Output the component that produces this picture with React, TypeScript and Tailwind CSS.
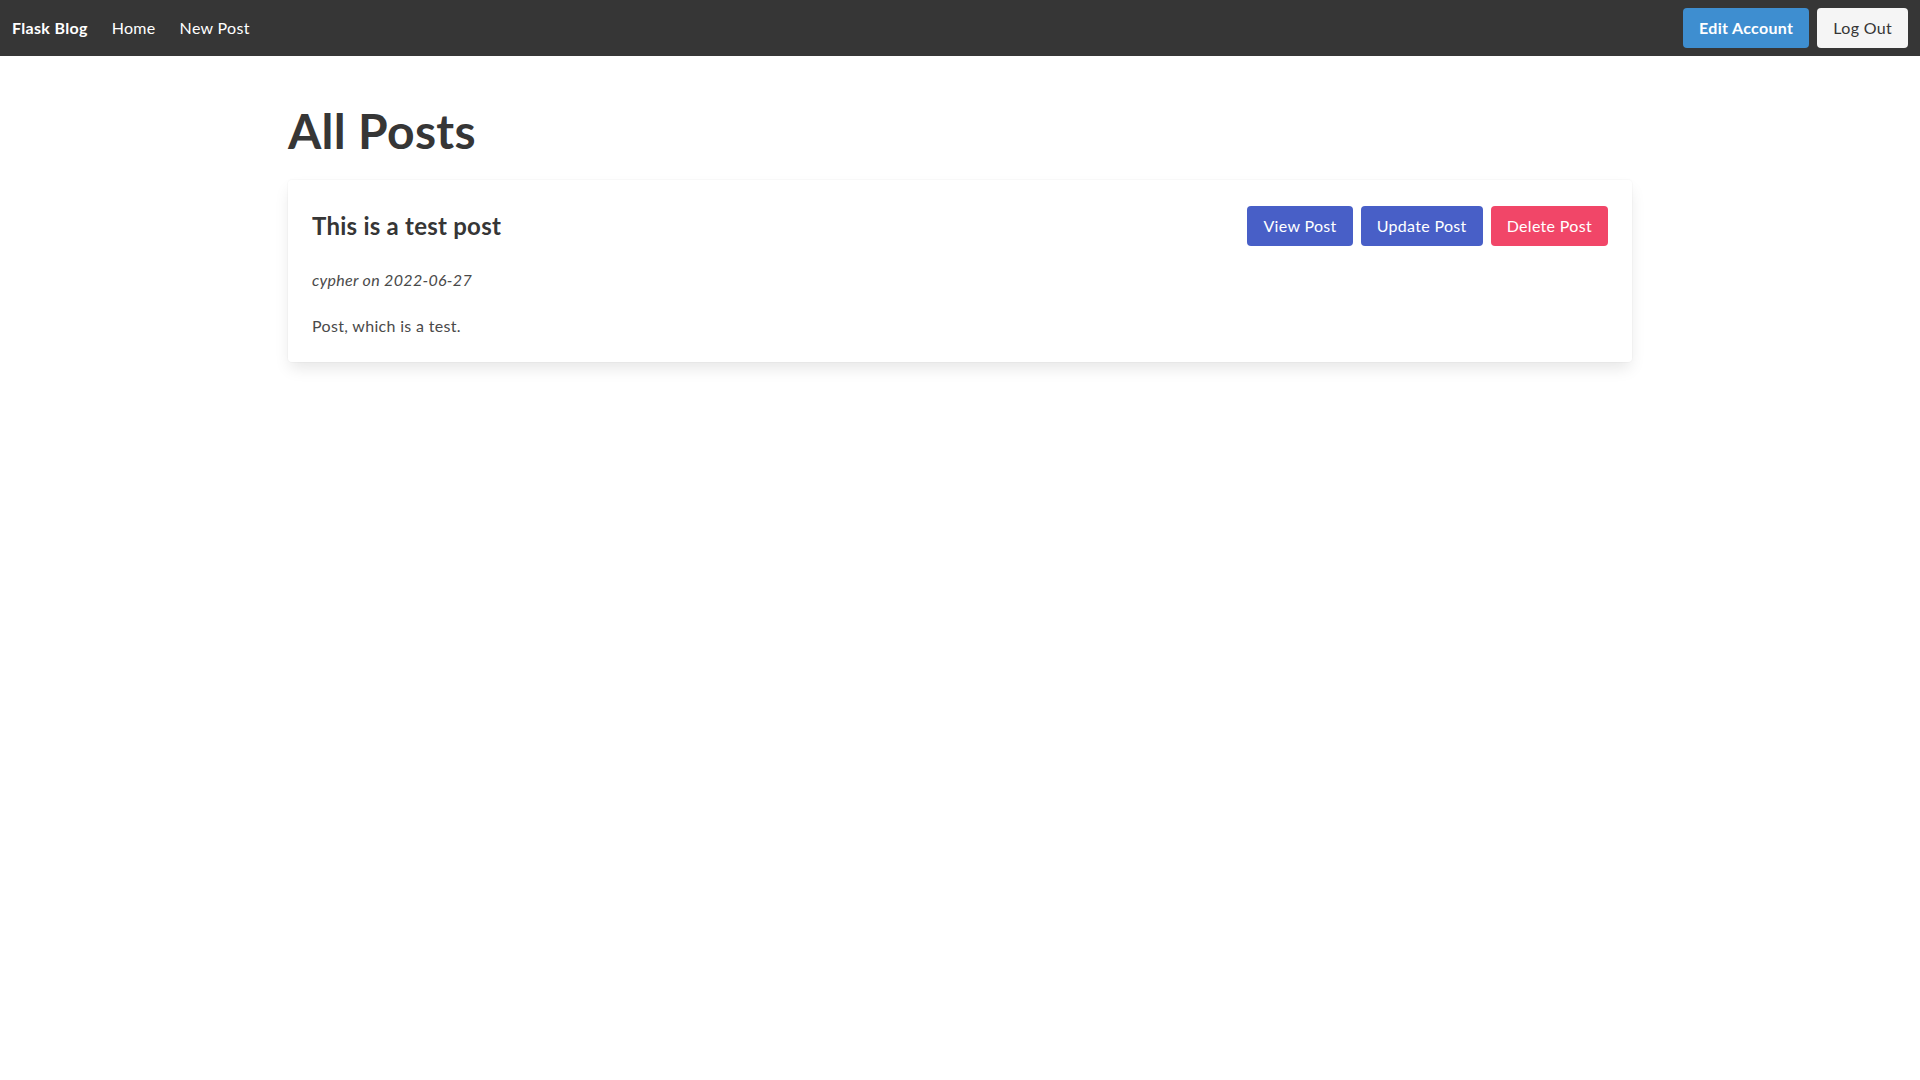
import React from "react";

const font = { fontFamily: 'Lato, "Open Sans", sans-serif' };

export default function App() {
  return (
    <div className="min-h-screen bg-white text-[#4a4a4a] text-[16px] tracking-[0.02em]" style={font}>
      <nav className="h-[56px] bg-[#363636] flex items-stretch justify-between">
        <div className="flex items-stretch">
          <a className="flex items-center px-3 text-white font-bold leading-6">Flask Blog</a>
          <a className="flex items-center px-3 text-white leading-6">Home</a>
          <a className="flex items-center px-3 text-white leading-6">New Post</a>
        </div>
        <div className="flex items-center gap-2 px-3">
          <button className="h-[40px] px-4 rounded-[4px] bg-[#3e8ed0] text-white font-bold leading-6">
            Edit Account
          </button>
          <button className="h-[40px] px-4 rounded-[4px] bg-[#f5f5f5] text-[#363636] leading-6">
            Log Out
          </button>
        </div>
      </nav>
      <section className="pt-12 px-6">
        <div className="max-w-[1344px] mx-auto">
          <h1 className="text-[48px] leading-[54px] font-bold text-[#363636] mb-[22px]">All Posts</h1>
          <div className="bg-white rounded-[4px] shadow-[0_8px_16px_-2px_rgba(10,10,10,0.1),0_0_0_1px_rgba(10,10,10,0.02)]">
            <div className="p-6">
              <div className="h-[44px] flex items-center justify-between">
                <h2 className="text-[24px] leading-[30px] font-bold text-[#363636] tracking-[0.01em]">This is a test post</h2>
                <div className="flex items-center gap-2">
                  <button className="h-[40px] px-4 rounded-[4px] bg-[#485fc7] text-white leading-6">View Post</button>
                  <button className="h-[40px] px-4 rounded-[4px] bg-[#485fc7] text-white leading-6">Update Post</button>
                  <button className="h-[40px] px-4 rounded-[4px] bg-[#f14668] text-white leading-6">Delete Post</button>
                </div>
              </div>
              <p className="mt-5 italic leading-6">cypher on 2022-06-27</p>
              <p className="mt-[22px] leading-6">Post, which is a test.</p>
            </div>
          </div>
        </div>
      </section>
    </div>
  );
}
